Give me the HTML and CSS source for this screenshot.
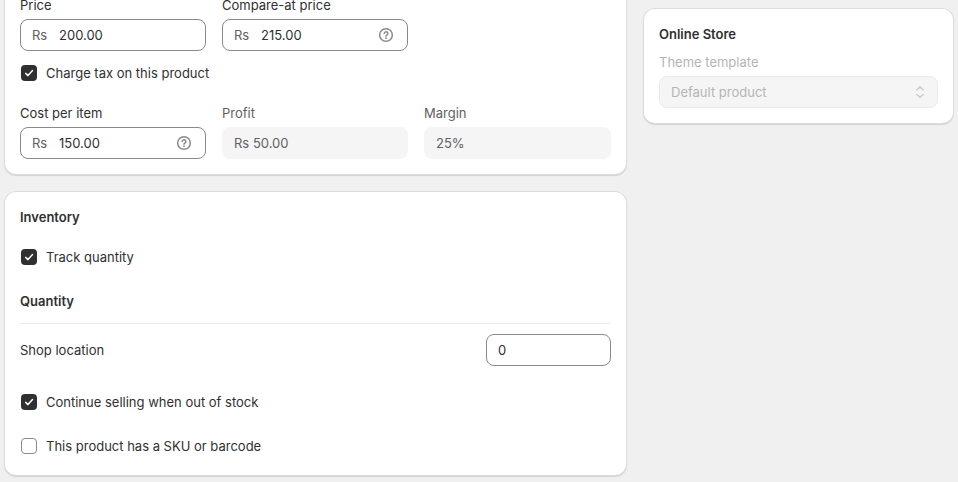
FILE: index.html
```
<!DOCTYPE html>
<html lang="en">
<head>
<meta charset="utf-8">
<title>Product</title>
<link rel="stylesheet" href="styles.css">
</head>
<body>
<svg class="sprite" aria-hidden="true">
  <symbol id="help" viewBox="0 0 20 20">
    <circle cx="10" cy="10" r="6.35" fill="none" stroke="currentColor" stroke-width="1.5"/>
    <path d="M8.2 8.6a1.8 1.8 0 1 1 2.8 1.5c-.6.4-1 .6-1 1.2" fill="none" stroke="currentColor" stroke-width="1.5" stroke-linecap="round"/>
    <circle cx="10" cy="13.2" r=".9" fill="currentColor"/>
  </symbol>
  <symbol id="check" viewBox="0 0 16 16">
    <path d="M4.7 8.4 7 10.6 11.5 5.6" fill="none" stroke="currentColor" stroke-width="1.5" stroke-linecap="round" stroke-linejoin="round"/>
  </symbol>
  <symbol id="updown" viewBox="0 0 20 20">
    <path d="M6.9 7.7 10 4.9l3.1 2.8M6.9 12.5l3.1 2.8 3.1-2.8" fill="none" stroke="currentColor" stroke-width="1.5" stroke-linecap="round" stroke-linejoin="round"/>
  </symbol>
</svg>
<div class="page">
  <main class="main">
    <section class="card pricing">
      <div class="row">
        <div class="field"><div class="label">Price</div><div class="input"><span class="prefix">Rs</span><span>200.00</span></div></div>
        <div class="field"><div class="label">Compare-at price</div><div class="input"><span class="prefix">Rs</span><span>215.00</span><svg class="help"><use href="#help"/></svg></div></div>
      </div>
      <div class="choice tax"><span class="box checked"><svg><use href="#check"/></svg></span>Charge tax on this product</div>
      <div class="row">
        <div class="field"><div class="label">Cost per item</div><div class="input"><span class="prefix">Rs</span><span>150.00</span><svg class="help"><use href="#help"/></svg></div></div>
        <div class="field muted"><div class="label">Profit</div><div class="input readonly">Rs 50.00</div></div>
        <div class="field muted"><div class="label">Margin</div><div class="input readonly">25%</div></div>
      </div>
    </section>
    <section class="card inventory">
      <h2>Inventory</h2>
      <div class="choice track"><span class="box checked"><svg><use href="#check"/></svg></span>Track quantity</div>
      <h2 class="quantity">Quantity</h2>
      <div class="location"><span>Shop location</span><div class="input count">0</div></div>
      <div class="choice selling"><span class="box checked"><svg><use href="#check"/></svg></span>Continue selling when out of stock</div>
      <div class="choice sku"><span class="box"></span>This product has a SKU or barcode</div>
    </section>
  </main>
  <aside class="card store">
    <h2>Online Store</h2>
    <div class="label">Theme template</div>
    <div class="input select"><span>Default product</span><svg class="updown"><use href="#updown"/></svg></div>
  </aside>
</div>
</body>
</html>
```

FILE: styles.css
```
* { box-sizing: border-box; }
body {
  margin: 0;
  height: 482px;
  overflow: hidden;
  background: #f0f0f0;
  color: #303030;
  font: 400 13px/20px Inter, "Liberation Sans", sans-serif;
}
.sprite { display: none; }
svg { display: block; flex: none; }
h2 { margin: 0; font-size: 13px; line-height: 20px; font-weight: 600; }
.page {
  display: grid;
  grid-template-columns: 623px 311px;
  gap: 16px;
  align-items: start;
  padding-left: 4px;
  height: 482px;
  overflow: hidden;
}
.main { display: flex; flex-direction: column; gap: 16px; margin-top: -21px; }
.card {
  padding: 16px;
  background: #fff;
  border-radius: 12px;
  box-shadow: 0 1px 1px rgba(0, 0, 0, .12), inset 0 0 0 1px #dcdcdc, inset 0 -1px 0 #ccc;
}
.row { display: grid; grid-template-columns: 186px 186px 187px; gap: 16px; }
.label { margin-bottom: 4px; }
.input {
  display: flex;
  align-items: center;
  height: 32px;
  padding: 0 12px;
  border: 1px solid #8a8a8a;
  border-radius: 8px;
  background: #fff;
}
.field .input { padding: 0 11px; }
.prefix { width: 27px; color: #616161; }
.help { width: 20px; height: 20px; margin-left: auto; color: #8a8a8a; }
.muted { color: #616161; }
.field .input.readonly { border: 0; padding: 0 12px; background: #f5f5f5; }
.choice { display: flex; align-items: center; gap: 9px; height: 20px; padding-left: 1px; }
.box { width: 16px; height: 16px; border: 1px solid #8a8a8a; border-radius: 4px; }
.box.checked { border: 0; background: #303030; color: #fff; }
.box svg { width: 16px; height: 16px; }
.tax { margin: 12px 0 20px; }
.inventory { height: 285px; }
.track { margin-top: 20px; }
.quantity { margin-top: 24px; }
.location {
  display: flex;
  align-items: center;
  justify-content: space-between;
  margin-top: 12px;
  padding-top: 10px;
  border-top: 1px solid #ebebeb;
}
.count { width: 125px; padding: 0 11px; }
.selling { margin-top: 26px; }
.sku { margin-top: 24px; }
.store { margin-top: 8px; }
.store h2 { margin-bottom: 8px; }
.store .label, .select { color: #b5b5b5; }
.input.select { justify-content: space-between; padding: 0 7px 0 11px; background: #f5f5f5; border-color: #ebebeb; }
.updown { width: 20px; height: 20px; color: #ccc; }
```
